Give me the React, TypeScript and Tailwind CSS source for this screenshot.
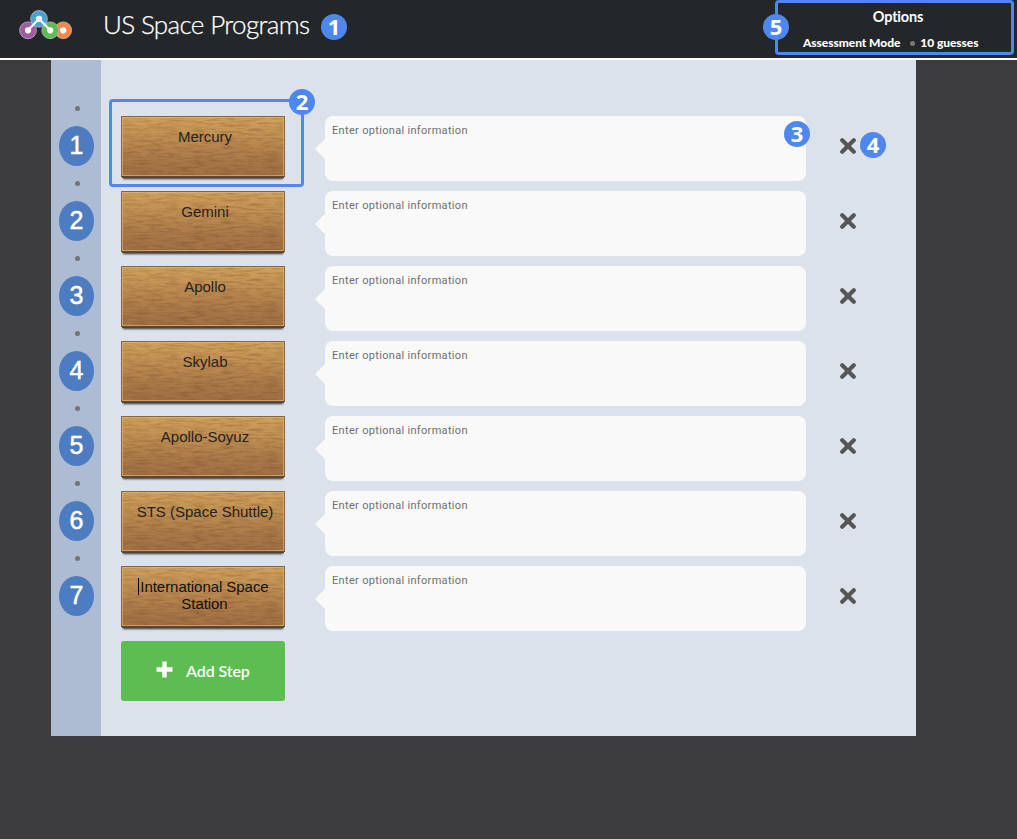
import React from "react";

const steps = [
  "Mercury",
  "Gemini",
  "Apollo",
  "Skylab",
  "Apollo-Soyuz",
  "STS (Space Shuttle)",
  "International Space Station",
];

function Logo() {
  const nodes = [
    { x: 63.2, y: 30.3, c: "#fb8447" },
    { x: 50.2, y: 30.3, c: "#5cbe4f" },
    { x: 28, y: 30.3, c: "#a35aa5" },
    { x: 39, y: 18.8, c: "#4ba3d3" },
  ];
  return (
    <svg width="80" height="50" viewBox="0 0 80 50" className="block shrink-0" aria-label="Logo">
      {nodes.map((n) => (
        <circle key={n.x} cx={n.x} cy={n.y} r="8.4" fill={n.c} stroke="#b4b8bc" strokeWidth="0.8" />
      ))}
      <path d="M28 30.3 39 18.8 50.2 30.3" fill="none" stroke="#fff" strokeWidth="2.2" />
      {nodes.map((n) => (
        <circle key={n.x} cx={n.x} cy={n.y} r="3.1" fill="#fff" />
      ))}
    </svg>
  );
}

function Badge({ n, className = "" }: { n: number; className?: string }) {
  return (
    <span
      className={`flex size-[26px] shrink-0 items-center justify-center rounded-full bg-[#4e88ee] font-['Open_Sans',sans-serif] text-[22px] leading-[26px] font-bold text-white ${className}`}
    >
      <span className="-mt-[3px]">{n}</span>
    </span>
  );
}

function Wood() {
  return (
    <svg width="164" height="62" className="absolute inset-0" aria-hidden="true">
      <defs>
        <linearGradient id="wood" x1="0" y1="0" x2="0" y2="1">
          <stop offset="0" stopColor="#d2a25d" />
          <stop offset="0.35" stopColor="#c08f53" />
          <stop offset="0.7" stopColor="#aa7a49" />
          <stop offset="1" stopColor="#a07045" />
        </linearGradient>
        <filter id="grain" x="0" y="0" width="100%" height="100%" colorInterpolationFilters="sRGB">
          <feTurbulence type="fractalNoise" baseFrequency="0.07 0.45" numOctaves="4" seed="8" />
          <feColorMatrix values="0 0 0 0 0.36  0 0 0 0 0.2  0 0 0 0 0.08  1.6 0 0 0 -0.62" />
        </filter>
      </defs>
      <rect width="164" height="61" fill="url(#wood)" />
      <rect width="164" height="61" filter="url(#grain)" opacity="0.35" />
      <rect x="1.5" y="1.5" width="161" height="58" fill="none" stroke="#e6bd82" strokeOpacity="0.6" />
      <path d="M.5 61V.5H163.5V61" fill="none" stroke="#89653a" />
      <path d="M0 60.5H164" stroke="#6a482b" />
      <path d="M1 61.5H163" stroke="#484440" />
    </svg>
  );
}

function Step({ label, index }: { label: string; index: number }) {
  const last = index === steps.length - 1;
  return (
    <div className="flex h-[65px] items-start">
      <div className="relative h-[62px] w-[164px] shrink-0 shadow-[0_3px_2px_-2px_#333]">
        <Wood />
        <div
          className={`relative flex justify-center px-[14px] pt-[12px] text-center font-['Liberation_Sans',Arial,sans-serif] text-[15px] leading-[17px] ${last ? "text-[#111]" : "text-[#25231f]"}`}
        >
          <span className={`relative ${last ? "ml-[3px] -tracking-[0.05px]" : "ml-[4px]"}`}>
            {last && <i className="absolute top-0 -left-[2px] h-[17px] w-px bg-black" />}
            {last ? (
              <>
                <span className="whitespace-nowrap">International Space</span>
                <br />
                Station
              </>
            ) : (
              <span className="whitespace-nowrap">{label}</span>
            )}
          </span>
        </div>
        {index === 0 && (
          <div className="absolute -top-[17px] -left-[12px] h-[88px] w-[195px] rounded-[4px] border-3 border-[#4e88ee]">
            <Badge n={2} className="absolute -top-[13px] -right-[14px]" />
          </div>
        )}
      </div>
      <div className="relative ml-10 h-[65px] w-[481px] shrink-0 rounded-lg bg-[#f9f9f9] pt-[8px] pl-[7px] font-[Roboto,sans-serif] text-[11px] leading-[14px] tracking-[0.32px] text-[#707070]">
        <svg width="10" height="20" className="absolute top-[23px] -left-[10px]" aria-hidden="true">
          <path d="M10 0V20L0 10Z" fill="#f9f9f9" />
        </svg>
        Enter optional information
        {index === 0 && <Badge n={3} className="absolute top-[5px] -right-[4px] tracking-normal" />}
      </div>
      <div className="ml-[34px] flex h-[60px] items-center">
        <svg width="16" height="16" viewBox="0 0 16 16" aria-label="Remove">
          <path d="M2.2 2.2 13.8 13.8M13.8 2.2 2.2 13.8" stroke="#555" strokeWidth="4.1" strokeLinecap="round" />
        </svg>
        {index === 0 && <Badge n={4} className="ml-1 -mt-[2px]" />}
      </div>
    </div>
  );
}

export default function App() {
  return (
    <div className="h-[839px] w-[1017px] overflow-hidden bg-[#3c3c3e] font-[Lato,sans-serif]">
      <header className="flex h-[60px] items-start border-b-2 border-white bg-[#232729] text-white">
        <Logo />
        <h1 className="ml-[23px] w-[218px] pt-[8px] text-[26px] leading-[32px] font-light -tracking-[0.65px] whitespace-nowrap [-webkit-text-stroke:0.25px_white]">
          US Space Programs
        </h1>
        <Badge n={1} className="mt-[14px]" />
        <div className="relative ml-auto mr-[3px] h-[55px] w-[239px] rounded-[4px] border-3 border-[#4e88ee] text-center font-bold">
          <div className="mt-[4px] pl-[7px] text-[14.5px] leading-[20px] -tracking-[0.2px]">Options</div>
          <div className="mt-[7px] ml-[25px] flex items-center text-[12px] leading-[18px] font-black -tracking-[0.06px] whitespace-nowrap">
            Assessment Mode
            <span className="mr-[5px] ml-[10px] size-[5px] rounded-full bg-[#777]" />
            10 guesses
          </div>
          <Badge n={5} className="absolute top-[11px] -left-[15px]" />
        </div>
      </header>
      <main className="ml-[51px] flex h-[676px] w-[865px] bg-[#dce2eb]">
        <div className="w-[50px] shrink-0 bg-[#adbbd3] pt-[46px]">
          {steps.map((s, i) => (
            <div key={s} className="h-[75px]">
              <div className="ml-[24px] size-[5px] rounded-full bg-[#747474]" />
              <div className="mt-[15px] ml-[8px] flex h-[40px] w-[35px] items-center justify-center rounded-[50%] bg-[#4e7cc0] pb-px font-['Liberation_Sans',Arial,sans-serif] text-[25px] leading-none text-white [-webkit-text-stroke:0.5px_white]">
                {i + 1}
              </div>
            </div>
          ))}
        </div>
        <div className="flex flex-col gap-[10px] pt-[56px] pl-5">
          {steps.map((s, i) => (
            <Step key={s} label={s} index={i} />
          ))}
          <button className="flex h-[60px] w-[164px] items-center rounded-[3px] bg-[#5dbd50] pl-[35px] text-[16px] font-semibold -tracking-[0.1px] text-white">
            <svg width="17" height="17" viewBox="0 0 17 17" className="-mt-[3px] mr-[13px]" aria-hidden="true">
              <path d="M8.5 .5V16.5M.5 8.5H16.5" stroke="#fff" strokeWidth="4.5" />
            </svg>
            Add Step
          </button>
        </div>
      </main>
    </div>
  );
}
